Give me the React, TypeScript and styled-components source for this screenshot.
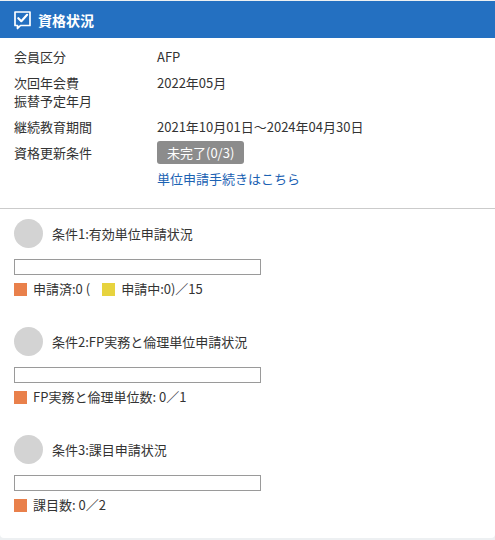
import React from "react";
import styled, { createGlobalStyle } from "styled-components";

const GlobalStyle = createGlobalStyle`
  html, body {
    margin: 0;
    padding: 0;
    background: #edf0f2;
  }
  body {
    font-family: "Noto Sans CJK JP", "Noto Sans", "Liberation Sans", sans-serif;
    font-size: 13px;
    color: #333;
  }
`;

const Card = styled.section`
  margin-top: 1px;
  width: 495px;
  background: #fff;
  border-radius: 0 0 4px 4px;
  overflow: hidden;
`;

const Header = styled.header`
  display: flex;
  align-items: center;
  gap: 6px;
  height: 37px;
  padding: 0 13px;
  background: #2470c1;
  color: #fff;
  font-size: 14px;
  font-weight: bold;
`;

const InfoList = styled.div`
  padding: 6px 14px 16px;
  border-bottom: 1px solid #cbcbcb;
`;

const Row = styled.div`
  display: grid;
  grid-template-columns: 143px 1fr;
  align-items: start;
  padding: 4px 0;
  line-height: 18px;
`;

const Label = styled.div`
  white-space: pre-line;
`;

const Badge = styled.span`
  display: inline-block;
  margin: -3px 0;
  padding: 0 10px;
  height: 23px;
  line-height: 23px;
  border-radius: 3px;
  background: #8c8c8c;
  color: #fff;
`;

const Link = styled.a`
  color: #1b62b3;
  text-decoration: none;
`;

const Conditions = styled.div`
  display: flex;
  flex-direction: column;
  gap: 31px;
  padding: 10px 14px 26px;
`;

const Condition = styled.div`
  display: flex;
  flex-direction: column;
  align-items: flex-start;
`;

const ConditionHead = styled.div`
  display: flex;
  align-items: center;
  gap: 9px;
`;

const Circle = styled.span`
  width: 29px;
  height: 29px;
  border-radius: 50%;
  background: #d3d3d3;
`;

const Bar = styled.div`
  box-sizing: border-box;
  width: 247px;
  height: 16px;
  margin-top: 11px;
  border: 1px solid #9a9a9a;
  background: #fff;
`;

const Legend = styled.div`
  display: flex;
  align-items: center;
  margin-top: 7px;
  line-height: 14px;
`;

const Swatch = styled.span<{ $color: string; $spaced?: boolean }>`
  width: 13px;
  height: 13px;
  margin-left: ${(p) => (p.$spaced ? "12px" : "0")};
  margin-right: 6px;
  background: ${(p) => p.$color};
`;

const ORANGE = "#e9804b";
const YELLOW = "#e7d33e";

const CheckIcon = () => (
  <svg width="19" height="20" viewBox="0 0 19 20">
    <path
      d="M2 2h15v13.5H7.5l-3 3v-3H2z"
      fill="none"
      stroke="#fff"
      strokeWidth="1.7"
      strokeLinejoin="round"
    />
    <path
      d="M5.3 8.2l3 3 5.8-6.4"
      fill="none"
      stroke="#fff"
      strokeWidth="2.2"
      strokeLinecap="round"
      strokeLinejoin="round"
    />
  </svg>
);

const info = [
  { label: "会員区分", value: "AFP" },
  { label: "次回年会費\n振替予定年月", value: "2022年05月" },
  { label: "継続教育期間", value: "2021年10月01日～2024年04月30日" },
];

function App() {
  return (
    <>
      <GlobalStyle />
      <Card>
        <Header>
          <CheckIcon />
          資格状況
        </Header>

        <InfoList>
          {info.map((item) => (
            <Row key={item.label}>
              <Label>{item.label}</Label>
              <div>{item.value}</div>
            </Row>
          ))}
          <Row>
            <Label>資格更新条件</Label>
            <div>
              <Badge>未完了(0/3)</Badge>
            </div>
          </Row>
          <Row>
            <div />
            <div>
              <Link href="#">単位申請手続きはこちら</Link>
            </div>
          </Row>
        </InfoList>

        <Conditions>
          <Condition>
            <ConditionHead>
              <Circle />
              条件1:有効単位申請状況
            </ConditionHead>
            <Bar />
            <Legend>
              <Swatch $color={ORANGE} />
              申請済:0 (
              <Swatch $color={YELLOW} $spaced />
              申請中:0)／15
            </Legend>
          </Condition>

          <Condition>
            <ConditionHead>
              <Circle />
              条件2:FP実務と倫理単位申請状況
            </ConditionHead>
            <Bar />
            <Legend>
              <Swatch $color={ORANGE} />
              FP実務と倫理単位数: 0／1
            </Legend>
          </Condition>

          <Condition>
            <ConditionHead>
              <Circle />
              条件3:課目申請状況
            </ConditionHead>
            <Bar />
            <Legend>
              <Swatch $color={ORANGE} />
              課目数: 0／2
            </Legend>
          </Condition>
        </Conditions>
      </Card>
    </>
  );
}

export default App;
